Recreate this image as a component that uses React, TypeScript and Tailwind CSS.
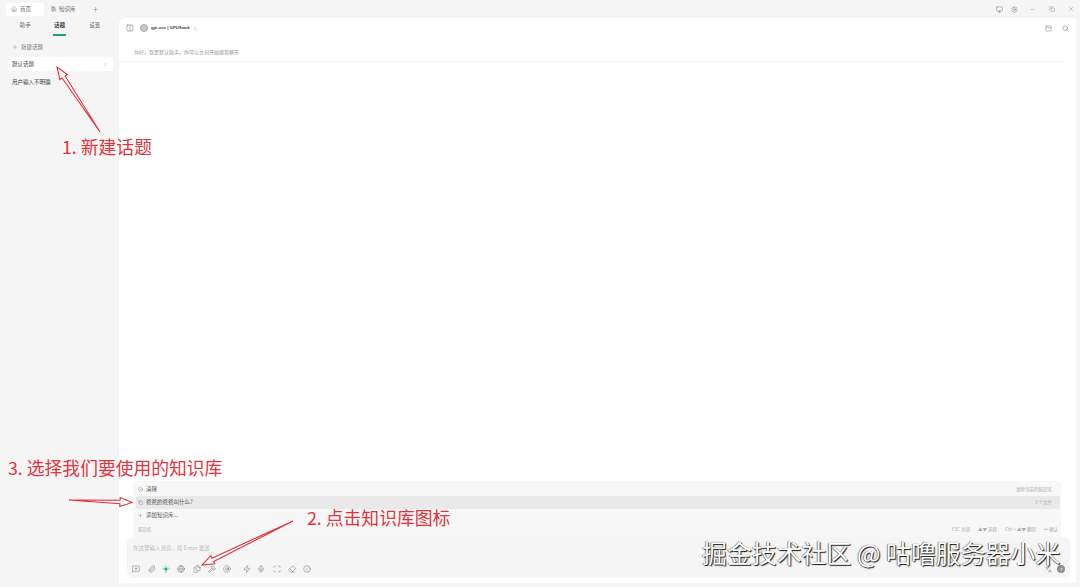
import { House, LibraryBig, Plus, X, PanelTop, ChevronsUpDown, Search, Monitor, Settings, Minus, Copy, MessageSquarePlus, Paperclip, Globe, Files, Hammer, AtSign, Zap, Mic, Scan, Eraser, CircleChevronLeft, CircleDot, Languages, ArrowUp, Columns2 } from "lucide-react";
import type { SVGProps } from "react";

const font = "font-['Noto_Sans_CJK_SC','Liberation_Sans',sans-serif]";

function Arrow({ x1, y1, x2, y2 }: { x1: number; y1: number; x2: number; y2: number }) {
  const dx = x2 - x1;
  const dy = y2 - y1;
  const len = Math.hypot(dx, dy);
  const ux = dx / len;
  const uy = dy / len;
  const nx = -uy;
  const ny = ux;
  const head = 12;
  const bx = x2 - ux * head;
  const by = y2 - uy * head;
  const p = (a: number, b: number, w: number) => `${a + nx * w},${b + ny * w}`;
  const d = `M${x1},${y1} L${p(bx, by, 1.8)} L${p(bx, by, 4.5)} L${x2},${y2} L${p(bx, by, -4.5)} L${p(bx, by, -1.8)} Z`;
  return <path d={d} fill="#fff" fillOpacity={0.75} stroke="#e5323b" strokeWidth={1.1} strokeLinejoin="miter" />;
}

function GlowBulb({ size = 8, ...rest }: SVGProps<SVGSVGElement> & { size?: number }) {
  return (
    <svg width={size} height={size} viewBox="0 0 24 24" fill="none" stroke="currentColor" strokeWidth={2.4} strokeLinecap="round" {...rest}>
      <path d="M12 2v3M4 5l2.5 2.5M20 5l-2.5 2.5M1.5 12h3M19.5 12h3" />
      <path d="M8 12a4 4 0 0 1 8 0c0 2-1.5 3-2 4.5h-4C9.5 15 8 14 8 12Z" fill="currentColor" />
      <path d="M10 20h4M11 23h2" />
    </svg>
  );
}

const tools = [
  { I: MessageSquarePlus },
  { I: Paperclip, cls: "ml-[1px]" },
  { I: GlowBulb, cls: "text-[#18a678] -ml-[1px]" },
  { I: Globe },
  { I: Files, cls: "ml-[1px]" },
  { I: Hammer },
  { I: AtSign },
  { I: Zap, cls: "ml-[5px]" },
  { I: Mic, cls: "-ml-[1px]" },
  { I: Scan, cls: "ml-[1px]" },
  { I: Eraser },
  { I: CircleChevronLeft },
];

export default function App() {
  return (
    <div className={`${font} relative w-[1080px] h-[587px] overflow-hidden bg-[#f5f5f5] flex flex-col`}>
      {/* Title bar */}
      <div className="h-[18px] shrink-0 flex items-center pl-[6px] text-[#666] text-[5.5px]">
        <div className="w-[38px] h-[13px] bg-white rounded-[3px] flex items-center pl-[5px] gap-[3px]">
          <House size={6} strokeWidth={1.5} />
          <span>首页</span>
        </div>
        <div className="ml-[7px] flex items-center gap-[2px] w-[32px]">
          <LibraryBig size={6} strokeWidth={1.5} />
          <span>知识库</span>
        </div>
        <Plus size={7} strokeWidth={1.2} className="ml-[9px]" />
        <div className="ml-auto flex items-center pr-[6px] text-[#666]">
          <Monitor size={7} strokeWidth={1.4} />
          <Settings size={7} strokeWidth={1.4} className="ml-[8px]" />
          <Minus size={5} strokeWidth={1.4} className="ml-[12px]" />
          <Copy size={6} strokeWidth={1.2} className="ml-[14px]" />
          <X size={6} strokeWidth={1.4} className="ml-[13px]" />
        </div>
      </div>

      <div className="flex-1 flex min-h-0">
        {/* Sidebar */}
        <aside className="w-[119px] shrink-0 flex flex-col text-[5.5px] text-[#666]">
          <div className="h-[18px] flex items-start pl-[8px] pr-[6px] relative pt-[3px]">
            <div className="w-[35px] text-center">助手</div>
            <div className="w-[35px] text-center text-[#222] font-medium relative">
              话题
              <div className="absolute left-[11px] top-[13px] w-[13px] h-[1.5px] bg-[#18a678]" />
            </div>
            <div className="w-[37px] text-center">设置</div>
          </div>
          <div className="mt-[6px] pl-[12px] flex items-center gap-[3px] h-[10px] text-[#777]">
            <Plus size={6} strokeWidth={1.5} />
            <span>新建话题</span>
          </div>
          <div className="mt-[5px] ml-[8px] mr-[6px] h-[14px] bg-white rounded-[3px] flex items-center pl-[4px] pr-[5px] justify-between text-[#444]">
            <span>默认话题</span>
            <X size={5} strokeWidth={1} className="text-[#888]" />
          </div>
          <div className="mt-[4px] ml-[12px] h-[15px] flex items-center text-[#444]">用户输入不明确</div>
        </aside>

        {/* Main */}
        <main className="flex-1 mr-[4px] mb-[4px] bg-white rounded-tl-[6px] flex flex-col min-w-0">
          <header className="h-[20px] shrink-0 flex items-center pl-[7px] pr-[7px] text-[#555]">
            <Columns2 size={8} strokeWidth={1.3} />
            <span className="ml-[6px] w-[8px] h-[8px] rounded-full bg-[#c8c8c8] border border-[#aaa]" />
            <span className="ml-[3px] text-[4.2px] text-[#444] font-bold font-['Liberation_Sans',sans-serif]">gpt-oss | GPUStack</span>
            <ChevronsUpDown size={5} strokeWidth={1.2} className="ml-[3px]" />
            <div className="ml-auto flex items-center gap-[10px]">
              <PanelTop size={7} strokeWidth={1.2} />
              <Search size={7} strokeWidth={1.4} />
            </div>
          </header>
          <div className="h-[24px] shrink-0 mr-[11px] border-b border-[#f4f4f4] pl-[15px] pt-[10px] text-[5px] leading-[8px] text-[#999]">
            你好，我是默认助手。你可以立刻开始跟我聊天
          </div>

          <div className="flex-1 min-h-0" />

          {/* Knowledge popup */}
          <div className="ml-[14px] mr-[15px] h-[56px] shrink-0 bg-[#f7f7f7] rounded-t-[4px] pt-[2px] pl-[3px] pr-[1px] text-[5.5px] text-[#555]">
            <div className="h-[12px] flex items-center pl-[2px] pr-[8px] justify-between">
              <span className="flex items-center gap-[3px]"><CircleDot size={5} strokeWidth={1.2} />清除</span>
              <span className="text-[4.5px] text-[#aaa]">清除当前的知识库</span>
            </div>
            <div className="mt-[1px] h-[13px] bg-[#e9e9e9] rounded-[2px] flex items-center pl-[2px] pr-[8px] justify-between">
              <span className="flex items-center gap-[3px]"><Copy size={5} strokeWidth={1.2} />爸爸的爸爸叫什么?</span>
              <span className="text-[4.5px] text-[#aaa]">1 个文件</span>
            </div>
            <div className="h-[13px] flex items-center pl-[2px]">
              <span className="flex items-center gap-[3px]"><Plus size={5} strokeWidth={1.2} />添加知识库...</span>
            </div>
            <div className="h-[14px] flex items-center pl-[2px] pr-[2px] justify-between text-[4.5px] text-[#aaa]">
              <span>知识库</span>
              <span className="flex gap-[8px]"><span>ESC 关闭</span><span>▲▼ 选择</span><span>Ctrl + ▲▼ 翻页</span><span>↵ 确认</span></span>
            </div>
          </div>

          {/* Input box */}
          <div className="ml-[8px] mr-[6px] mb-[5px] h-[41px] shrink-0 bg-[#f5f5f5] rounded-[6px] flex flex-col pl-[5px] pr-[5px]">
            <div className="pl-[1px] pt-[7px] text-[5.5px] leading-[8px] text-[#bbb]">在这里输入消息，按 Enter 发送</div>
            <div className="mt-auto mb-[5px] flex items-center justify-between">
              <div className="flex items-center gap-[7px] text-[#555]">
                {tools.map(({ I, cls }, i) => (
                  <I key={i} size={8} strokeWidth={1.2} className={cls ?? ""} />
                ))}
              </div>
              <div className="flex items-center gap-[5px]">
                <Languages size={7} strokeWidth={1.2} className="text-[#666]" />
                <span className="w-[8px] h-[8px] rounded-full bg-[#8e8e8e] flex items-center justify-center text-white">
                  <ArrowUp size={5} strokeWidth={2} />
                </span>
              </div>
            </div>
          </div>
        </main>
      </div>

      {/* Red annotations */}
      <svg className="absolute inset-0 pointer-events-none" width={1080} height={587}>
        <Arrow x1={100} y1={132} x2={57} y2={67} />
        <Arrow x1={69} y1={500} x2={132} y2={502.5} />
        <Arrow x1={293} y1={521} x2={202} y2={565} />
      </svg>
      <div className="absolute left-[62px] top-[133px] text-[17.8px] leading-[26px] text-[#e5323b] whitespace-nowrap">1. 新建话题</div>
      <div className="absolute left-[307px] top-[504px] text-[17.8px] leading-[26px] text-[#e5323b] whitespace-nowrap">2. 点击知识库图标</div>
      <div className="absolute left-[8px] top-[454px] text-[17.8px] leading-[26px] text-[#e5323b] whitespace-nowrap">3. 选择我们要使用的知识库</div>

      {/* Watermark */}
      <div className="absolute left-[702px] top-[535px] text-[24.9px] leading-[34px] text-white whitespace-nowrap [text-shadow:1px_1px_1px_rgba(0,0,0,0.9),-0.5px_-0.5px_1px_rgba(0,0,0,0.7)]">掘金技术社区 @ 咕噜服务器小米</div>
    </div>
  );
}
